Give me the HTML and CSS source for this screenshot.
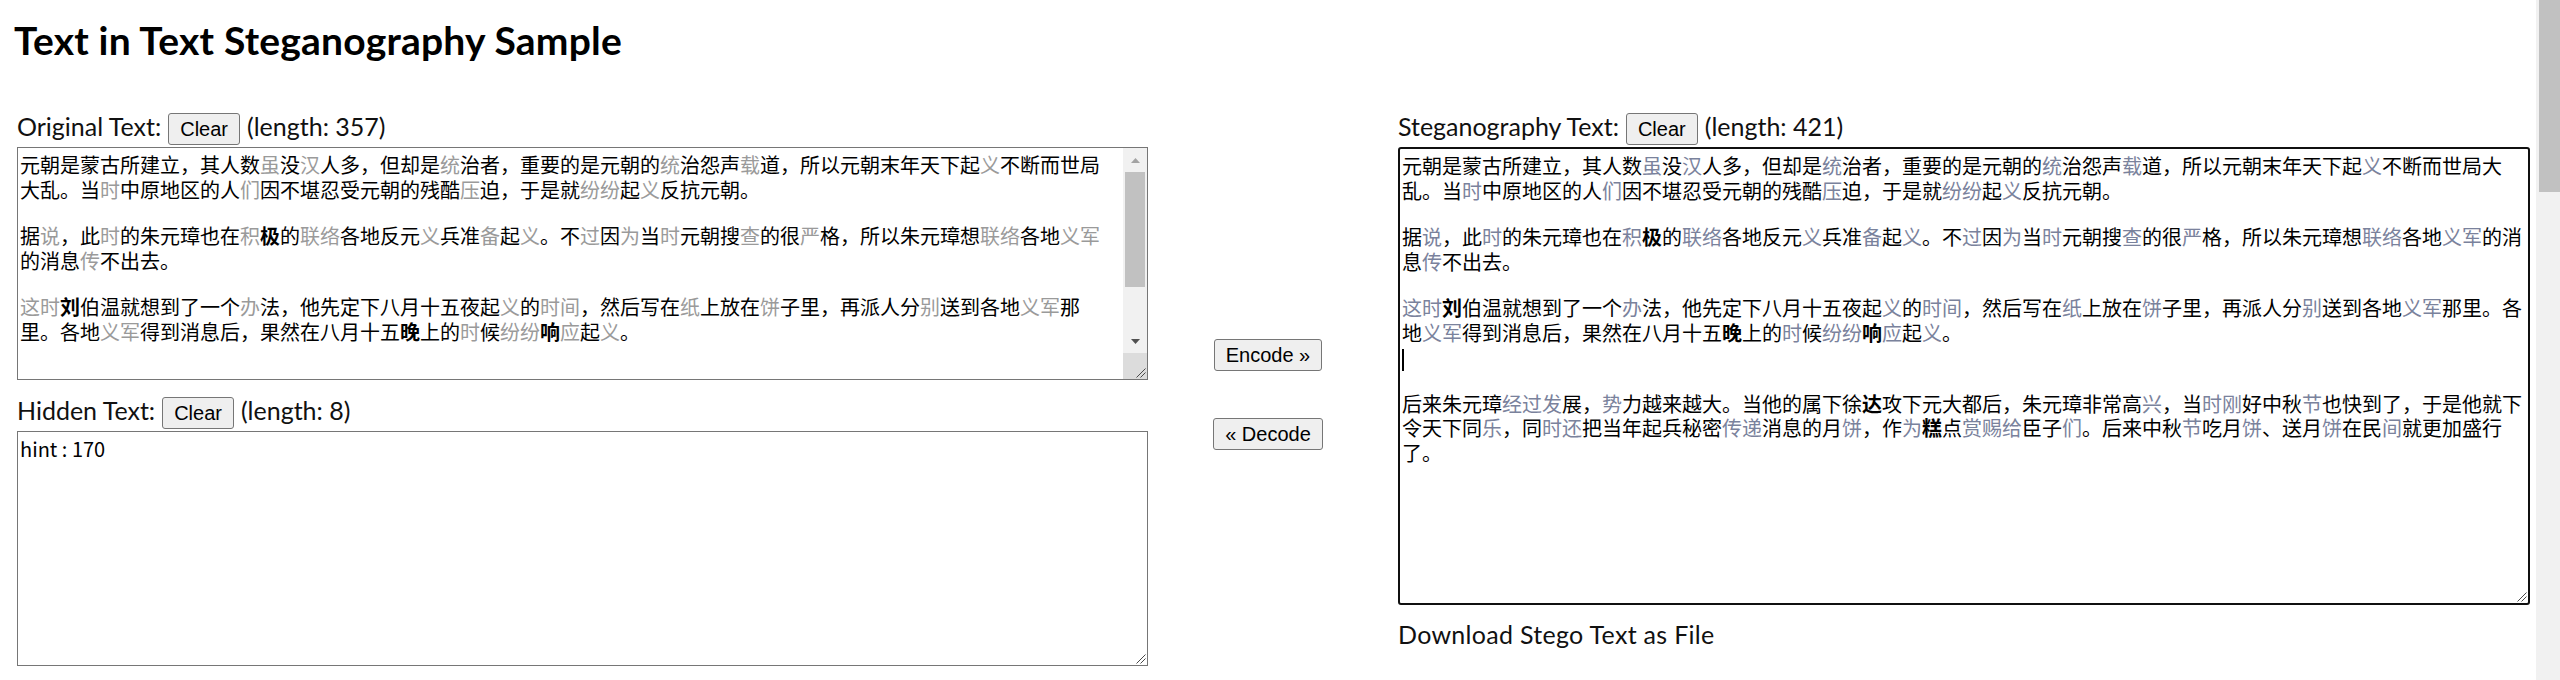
FILE: index.html
```html
<!DOCTYPE html>
<html lang="zh">
<head>
<meta charset="utf-8">
<title>Text in Text Steganography Sample</title>
<link rel="stylesheet" href="styles.css">
</head>
<body>
<div class="page">
  <h1 class="title">Text in Text Steganography Sample</h1>
  <div class="columns">
    <div class="col">
      <div class="field-head"><span class="label">Original Text:</span><button class="btn">Clear</button><span class="len">(length: 357)</span></div>
      <div class="box box-orig">
        <div class="text">
          <div class="ln">元朝是蒙古所建立，其人数<span class="g">虽</span>没<span class="g">汉</span>人多，但却是<span class="g">统</span>治者，重要的是元朝的<span class="g">统</span>治怨声<span class="g">载</span>道，所以元朝末年天下起<span class="g">义</span>不断而世局</div>
          <div class="ln">大乱。当<span class="g">时</span>中原地区的人<span class="g">们</span>因不堪忍受元朝的残酷<span class="g">压</span>迫，于是就<span class="g">纷纷</span>起<span class="g">义</span>反抗元朝。</div>
          <div class="blank"></div>
          <div class="ln">据<span class="g">说</span>，此<span class="g">时</span>的朱元璋也在<span class="g">积</span><b>极</b>的<span class="g">联络</span>各地反元<span class="g">义</span>兵准<span class="g">备</span>起<span class="g">义</span>。不<span class="g">过</span>因<span class="g">为</span>当<span class="g">时</span>元朝搜<span class="g">查</span>的很<span class="g">严</span>格，所以朱元璋想<span class="g">联络</span>各地<span class="g">义军</span></div>
          <div class="ln">的消息<span class="g">传</span>不出去。</div>
          <div class="blank"></div>
          <div class="ln"><span class="g">这时</span><b>刘</b>伯温就想到了一个<span class="g">办</span>法，他先定下八月十五夜起<span class="g">义</span>的<span class="g">时间</span>，然后写在<span class="g">纸</span>上放在<span class="g">饼</span>子里，再派人分<span class="g">别</span>送到各地<span class="g">义军</span>那</div>
          <div class="ln">里。各地<span class="g">义军</span>得到消息后，果然在八月十五<b>晚</b>上的<span class="g">时</span>候<span class="g">纷纷</span><b>响</b><span class="g">应</span>起<span class="g">义</span>。</div>
        </div>
        <div class="vscroll">
          <div class="sb-btn"><svg width="9" height="5" viewBox="0 0 9 5"><path d="M0 5 L4.5 0 L9 5Z" fill="#a3a3a3"/></svg></div>
          <div class="sb-thumb"></div>
          <div class="sb-track"></div>
          <div class="sb-btn"><svg width="9" height="5" viewBox="0 0 9 5"><path d="M0 0 L9 0 L4.5 5Z" fill="#505050"/></svg></div>
          <div class="sb-corner"><svg class="grip" width="12" height="12" viewBox="0 0 12 12"><path d="M11.5 2.5 L2.5 11.5 M11.5 6.5 L6.5 11.5" stroke="#4a4a4a" stroke-width="1" fill="none"/></svg></div>
        </div>
      </div>

      <div class="field-head hidden-head"><span class="label">Hidden Text:</span><button class="btn">Clear</button><span class="len">(length: 8)</span></div>
      <div class="box box-hidden">
        <div class="text">
          <div class="ln">hint : 170</div>
        </div>
        <svg class="grip grip-box" width="12" height="12" viewBox="0 0 12 12"><path d="M11.5 2.5 L2.5 11.5 M11.5 6.5 L6.5 11.5" stroke="#4a4a4a" stroke-width="1" fill="none"/></svg>
      </div>
    </div>

    <div class="mid">
      <button class="btn">Encode »</button>
      <button class="btn">« Decode</button>
    </div>

    <div class="col col-right">
      <div class="field-head"><span class="label">Steganography Text:</span><button class="btn">Clear</button><span class="len">(length: 421)</span></div>
      <div class="box box-stego">
        <div class="text">
          <div class="ln">元朝是蒙古所建立，其人数<span class="g">虽</span>没<span class="g">汉</span>人多，但却是<span class="g">统</span>治者，重要的是元朝的<span class="g">统</span>治怨声<span class="g">载</span>道，所以元朝末年天下起<span class="g">义</span>不断而世局大</div>
          <div class="ln">乱。当<span class="g">时</span>中原地区的人<span class="g">们</span>因不堪忍受元朝的残酷<span class="g">压</span>迫，于是就<span class="g">纷纷</span>起<span class="g">义</span>反抗元朝。</div>
          <div class="blank"></div>
          <div class="ln">据<span class="g">说</span>，此<span class="g">时</span>的朱元璋也在<span class="g">积</span><b>极</b>的<span class="g">联络</span>各地反元<span class="g">义</span>兵准<span class="g">备</span>起<span class="g">义</span>。不<span class="g">过</span>因<span class="g">为</span>当<span class="g">时</span>元朝搜<span class="g">查</span>的很<span class="g">严</span>格，所以朱元璋想<span class="g">联络</span>各地<span class="g">义军</span>的消</div>
          <div class="ln">息<span class="g">传</span>不出去。</div>
          <div class="blank"></div>
          <div class="ln"><span class="g">这时</span><b>刘</b>伯温就想到了一个<span class="g">办</span>法，他先定下八月十五夜起<span class="g">义</span>的<span class="g">时间</span>，然后写在<span class="g">纸</span>上放在<span class="g">饼</span>子里，再派人分<span class="g">别</span>送到各地<span class="g">义军</span>那里。各</div>
          <div class="ln">地<span class="g">义军</span>得到消息后，果然在八月十五<b>晚</b>上的<span class="g">时</span>候<span class="g">纷纷</span><b>响</b><span class="g">应</span>起<span class="g">义</span>。</div>
          <div class="ln"><span class="caret"></span></div>
          <div class="blank"></div>
          <div class="ln">后来朱元璋<span class="g">经过发</span>展，<span class="g">势</span>力越来越大。当他的属下徐<b>达</b>攻下元大都后，朱元璋非常高<span class="g">兴</span>，当<span class="g">时刚</span>好中秋<span class="g">节</span>也快到了，于是他就下</div>
          <div class="ln">令天下同<span class="g">乐</span>，同<span class="g">时还</span>把当年起兵秘密<span class="g">传递</span>消息的月<span class="g">饼</span>，作<span class="g">为</span><b>糕</b>点<span class="g">赏赐给</span>臣子<span class="g">们</span>。后来中秋<span class="g">节</span>吃月<span class="g">饼</span>、送月<span class="g">饼</span>在民<span class="g">间</span>就更加盛行</div>
          <div class="ln">了。</div>
        </div>
        <svg class="grip grip-box" width="12" height="12" viewBox="0 0 12 12"><path d="M11.5 2.5 L2.5 11.5 M11.5 6.5 L6.5 11.5" stroke="#4a4a4a" stroke-width="1" fill="none"/></svg>
      </div>
      <div class="download">Download Stego Text as File</div>
    </div>
  </div>
</div>
<div class="page-scroll"><div class="page-thumb"></div></div>
</body>
</html>
```

FILE: styles.css
```css
* { box-sizing: border-box; }
html, body { margin: 0; padding: 0; background: #fff; }
body {
  font-family: Lato, "Noto Sans CJK JP", sans-serif;
  color: #111;
  overflow: hidden;
}
.page {
  padding-left: 17px;
  width: 2536px;
}
.title {
  margin: 18px 0 0 -3px;
  font-size: 39px;
  line-height: 44px;
  font-weight: 700;
  letter-spacing: 0.2px;
  color: #000;
}
.columns {
  display: flex;
  align-items: flex-start;
  margin-top: 49px;
}
.col {
  width: 1131px;
  display: flex;
  flex-direction: column;
}
.col-right { width: 1132px; }
.mid {
  width: 250px;
  padding-top: 228px;
  padding-right: 10px;
  display: flex;
  flex-direction: column;
  align-items: center;
  gap: 47px;
}
.field-head {
  display: flex;
  align-items: baseline;
  gap: 7px;
  font-size: 25px;
  line-height: 30px;
  margin-bottom: 2px;
  color: #111;
}
.hidden-head { margin-top: 15px; }
.btn {
  font-family: "Liberation Sans", Arial, sans-serif;
  font-size: 20px;
  line-height: 30px;
  height: 32px;
  padding: 0 11px;
  border: 1px solid #767676;
  border-radius: 3px;
  background: #efefef;
  color: #000;
}
.box {
  position: relative;
  border: 1px solid #767676;
  background: #fff;
  overflow: hidden;
}
.box-orig { height: 233px; }
.box-hidden { height: 235px; }
.box-stego {
  height: 458px;
  border: 2px solid #101010;
  border-radius: 3px;
}
.text {
  padding: 5px 2px 0 2px;
  font-family: "Noto Sans CJK JP", "Noto Sans CJK SC", sans-serif;
  font-size: 20px;
  color: #000;
}
.ln {
  height: 24.5px;
  line-height: 24.5px;
  white-space: nowrap;
}
.blank { height: 22px; }
.text b { font-weight: 700; }
.box-orig .g { color: #9a9a9a; }
.box-stego .g { color: #7a829c; }
.caret {
  display: inline-block;
  width: 2px;
  height: 22px;
  background: #000;
  vertical-align: middle;
}
.vscroll {
  position: absolute;
  top: 0;
  right: 0;
  bottom: 0;
  width: 24px;
  background: #f1f1f1;
  display: flex;
  flex-direction: column;
}
.sb-btn {
  height: 24px;
  display: flex;
  align-items: center;
  justify-content: center;
}
.sb-thumb {
  height: 115px;
  margin: 0 2px;
  background: #c1c1c1;
}
.sb-track { flex: 1; }
.sb-corner {
  height: 26px;
  background: #dcdcdc;
  position: relative;
}
.grip {
  position: absolute;
  right: 1px;
  bottom: 1px;
}
.download {
  margin-top: 15px;
  font-size: 25px;
  line-height: 29px;
  letter-spacing: 0.3px;
  color: #111;
}
.page-scroll {
  position: fixed;
  top: 0;
  right: 0;
  width: 24px;
  height: 100%;
  background: #f1f1f1;
}
.page-thumb {
  margin-left: 3px;
  height: 192px;
  background: #c1c1c1;
}
```
